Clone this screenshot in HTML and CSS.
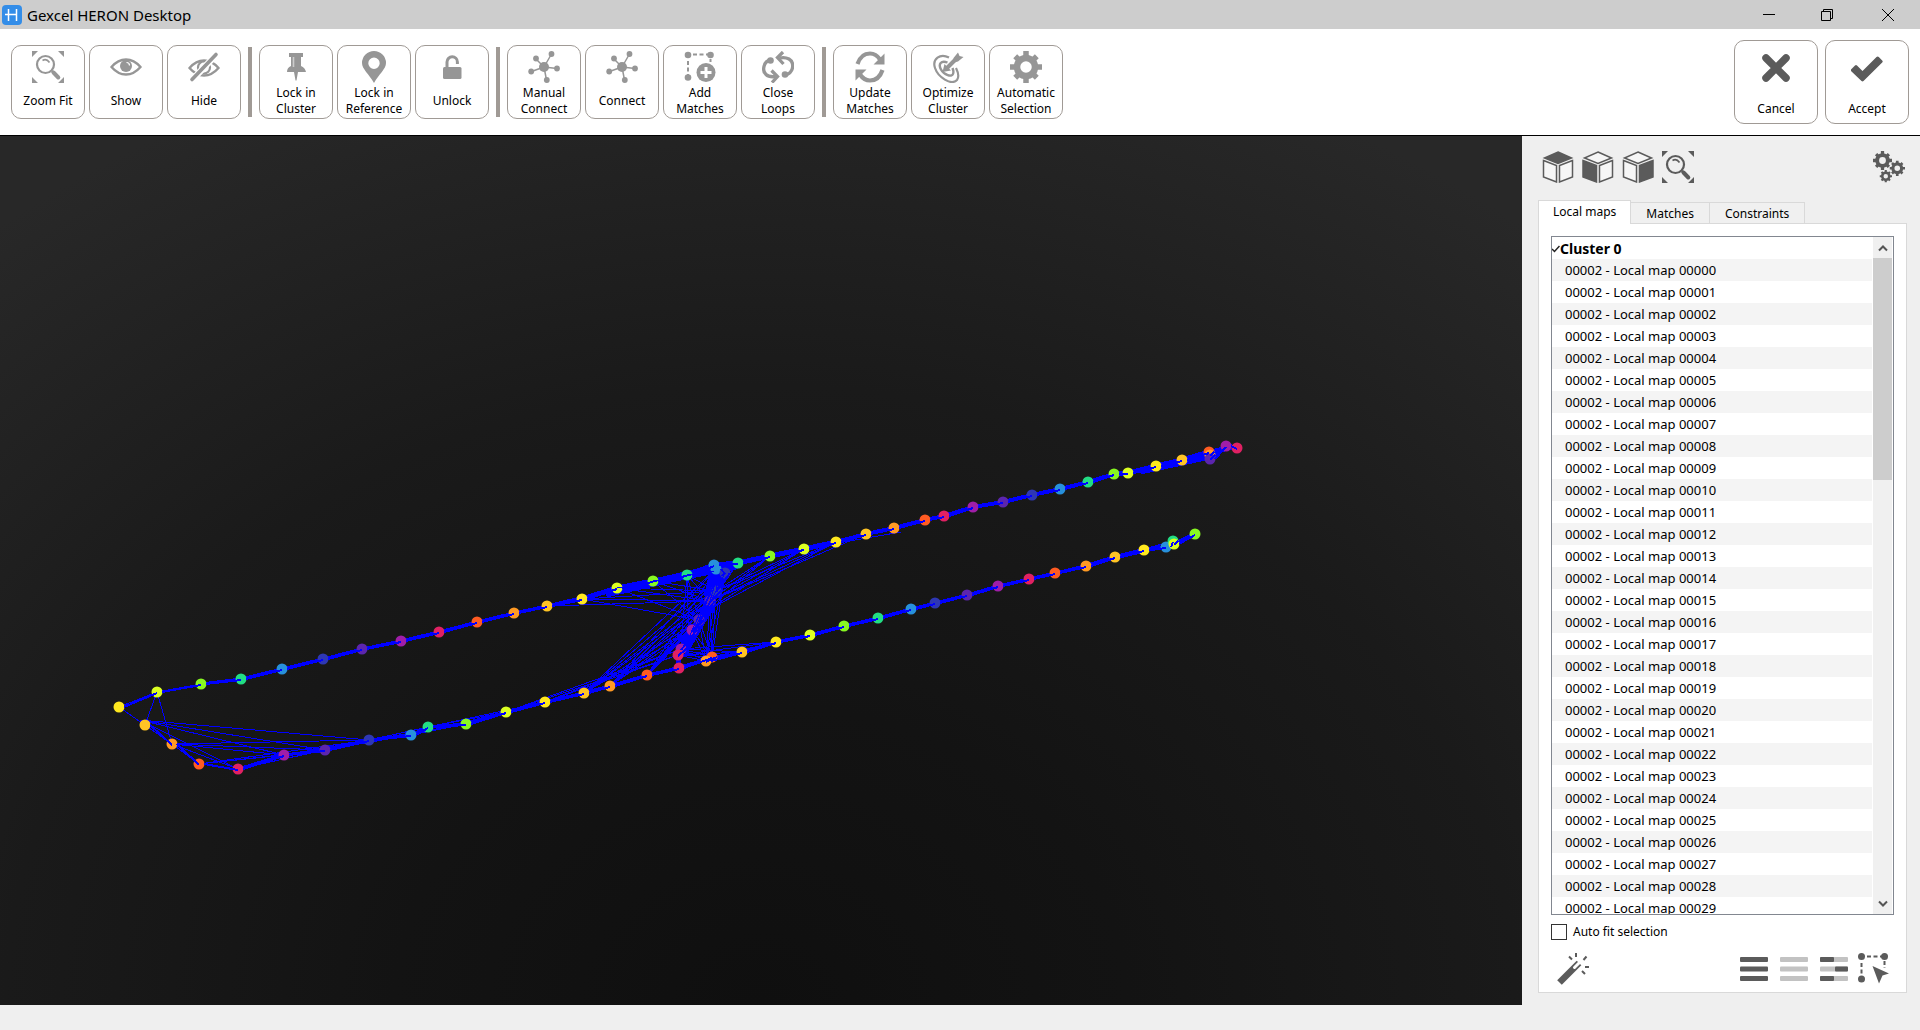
FILE: index.html
```html
<!DOCTYPE html>
<html lang="en">

<head>
    <meta charset="UTF-8">
    <meta name="viewport" content="width=device-width, initial-scale=1.0">
    <title>Gexcel HERON Desktop</title>
    <link rel="stylesheet" href="styles.css">
</head>

<body>
    <!-- shared icons -->
    <svg class="sprite" aria-hidden="true">
        <symbol id="i-zoom" viewBox="0 0 32 32">
            <path fill="currentColor" d="M0 0h6L0 6zM32 0h-6l6 6zM0 32h6l-6-6zM32 32h-6l6-6z" />
            <circle cx="13.500" cy="13.500" r="8.500" fill="none" stroke="currentColor" stroke-width="2.200" />
            <path d="M10.500 9.500q4-2.500 7 2" fill="none" stroke="currentColor" stroke-width="1.600" />
            <path d="M20 20l1.500 1.500" stroke="currentColor" stroke-width="2.500" />
            <path d="M21.500 21.500l4.800 5" stroke="currentColor" stroke-width="4" stroke-linecap="round" />
        </symbol>
        <symbol id="i-eye" viewBox="0 0 32 32">
            <path d="M1.500 16Q8 8.500 16 8.500T30.500 16Q24 23.500 16 23.500T1.500 16z" fill="none" stroke="currentColor" stroke-width="2.400" />
            <circle cx="16" cy="15" r="6" fill="currentColor" />
            <path d="M16.500 11.500q3 0 3 3" fill="none" stroke="#fff" stroke-width="1.200" />
        </symbol>
        <symbol id="i-hide" viewBox="0 0 32 32">
            <path d="M1.500 17Q8 9.500 16 9.500T30.500 17Q24 24.500 16 24.500T1.500 17z" fill="none" stroke="currentColor" stroke-width="2.400" />
            <circle cx="16" cy="16.500" r="6" fill="none" stroke="currentColor" stroke-width="2.200" />
            <path d="M5 28L28 4" stroke="#fff" stroke-width="6.500" />
            <path d="M4 28.500L28 3.500" stroke="currentColor" stroke-width="3.600" stroke-linecap="round" />
        </symbol>
        <symbol id="i-pin" viewBox="0 0 32 32">
            <path fill="currentColor" d="M9 2h14v4h-2v9q4 1.500 5 6h-8l-1.500 8.500h-1L14 21H7q0-4.500 4-6V6H9z" />
            <path d="M13.500 6v10" stroke="#ccc" stroke-width="1.600" />
        </symbol>
        <symbol id="i-marker" viewBox="0 0 32 32">
            <path fill="currentColor" fill-rule="evenodd" d="M16 0a12 12 0 0 1 12 12c0 6-7 11-12 20C11 23 4 18 4 12A12 12 0 0 1 16 0zm0 6.500a5.700 5.700 0 1 0 0 11.400a5.700 5.700 0 0 0 0-11.400z" />
        </symbol>
        <symbol id="i-unlock" viewBox="0 0 32 32">
            <rect x="7" y="16" width="18.500" height="12" rx="1.500" fill="currentColor" />
            <path d="M11 17v-6a5.200 5.200 0 0 1 10.400 0v2" fill="none" stroke="currentColor" stroke-width="3" />
        </symbol>
        <symbol id="i-nodes" viewBox="0 0 32 32">
            <path d="M16 16L8 8M16 16L23.500 3M16 16l13 1.500M16 16L3.500 20.500M16 16l2.500 13" stroke="currentColor" stroke-width="1.500" />
            <g fill="currentColor">
                <circle cx="16" cy="16" r="5" />
                <circle cx="8" cy="7.500" r="2.900" />
                <circle cx="23.500" cy="3" r="2.900" />
                <circle cx="29" cy="17.500" r="2.900" />
                <circle cx="3.200" cy="20.500" r="2.900" />
                <circle cx="18.800" cy="29" r="2.900" />
            </g>
        </symbol>
        <symbol id="i-add" viewBox="0 0 32 32">
            <path d="M4 10v14M9 3.500h15M26.500 8v3" fill="none" stroke="currentColor" stroke-width="2" stroke-dasharray="4 2.500" />
            <g fill="currentColor">
                <circle cx="4" cy="4" r="3.300" />
                <circle cx="26.500" cy="4" r="3.300" />
                <circle cx="4" cy="26.500" r="3.300" />
                <circle cx="22" cy="21.500" r="9.500" />
            </g>
            <path d="M22 16v11M16.500 21.500h11" stroke="#fff" stroke-width="3" />
        </symbol>
        <symbol id="i-loops" viewBox="0 0 32 32">
            <g fill="none" stroke="currentColor" stroke-width="3.300">
                <path d="M9 9C1 10 0 20 4 23.500q3 3 10 2" />
                <path d="M23 24.500C33 21 32 11 27 8q-4-2-9-1" />
                <path d="M9.500 19.500l6 6-5.500 6M21 1l-5.500 5.500 6 6.500" />
            </g>
            <circle cx="8.500" cy="9.500" r="3.300" fill="currentColor" />
            <circle cx="23" cy="23.500" r="3.300" fill="currentColor" />
        </symbol>
        <symbol id="i-update" viewBox="0 0 32 32">
            <path d="M3.500 13Q7 2.500 16 2.500q6 0 10 6M28.500 19Q25 29.500 16 29.500q-6 0-10-6" fill="none" stroke="currentColor" stroke-width="4.200" />
            <path fill="currentColor" d="M30.500 2.500v11H19.500zM1.500 29.500v-11h11z" />
        </symbol>
        <symbol id="i-target" viewBox="0 0 32 32">
            <g fill="none" stroke="currentColor">
                <path d="M17 6.500C8 2 0 8 3 17s16 18 22 12q3-4-1-12" stroke-width="2.200" />
                <path d="M15.500 11.500C9 9 6 13 9 18.500s11 8 12 4.500q1-2-.5-6" stroke-width="2.400" />
                <path d="M13.500 18.500L24 8" stroke-width="4" />
            </g>
            <path fill="currentColor" d="M21.500 7L26 1.500 27.500 5l4 1L26 10.500l-4 1zM10.500 21l2-8 6.500 6.500z" />
        </symbol>
        <symbol id="i-gear" viewBox="0 0 32 32">
            <circle cx="16" cy="16" r="9" fill="none" stroke="currentColor" stroke-width="6.500" />
            <path d="M16 0v6M16 26v6M0 16h6M26 16h6M5.200 5.200L9 9M23 23l3.800 3.800M5.200 26.800L9 23M23 9l3.800-3.800" stroke="currentColor" stroke-width="5.500" />
        </symbol>
        <symbol id="i-cross" viewBox="0 0 32 32">
            <path d="M6 6l20 20M26 6L6 26" stroke="currentColor" stroke-width="7.500" stroke-linecap="round" />
        </symbol>
        <symbol id="i-check" viewBox="0 0 32 32">
            <path d="M0 17.500l4-4q1-.8 2 0l5.500 5.500L25.500 5q1.200-1 2.300 0l3.400 3.600q1 1 0 2L12.500 29q-1 .8-2 0L0 19z" fill="currentColor" />
        </symbol>
        <symbol id="i-select" viewBox="0 0 32 32">
            <path d="M3.500 10v14M9 3.500h15M26.500 8v7" fill="none" stroke="currentColor" stroke-width="2" stroke-dasharray="4 2.500" />
            <g fill="currentColor">
                <circle cx="3.500" cy="3.500" r="3.500" />
                <circle cx="26.500" cy="3.500" r="3.500" />
                <circle cx="3.500" cy="26" r="3.500" />
                <path d="M14.500 13l16.500 7.500-6.500 2L21 30.500z" />
            </g>
        </symbol>
    </svg>

    <header class="titlebar">
        <svg class="app-logo" viewBox="0 0 20 20">
            <rect width="20" height="20" rx="4" fill="#338de8" />
            <path d="M6.500 4v12M14.500 4v12M3 9.500h11.500" stroke="#fff" stroke-width="1.500" />
        </svg>
        <h1>Gexcel HERON Desktop</h1>
        <div class="window-buttons">
            <button type="button" aria-label="Minimize"><svg viewBox="0 0 12 12"><path d="M0 5.500h12" /></svg></button>
            <button type="button" aria-label="Restore"><svg viewBox="0 0 12 12"><path d="M.5 2.500h9v9h-9zM2.500 2.500v-2h9v9h-2" /></svg></button>
            <button type="button" aria-label="Close"><svg viewBox="0 0 12 12"><path d="M0 0l12 12M12 0L0 12" /></svg></button>
        </div>
    </header>

    <div class="toolbar">
        <div class="tool-group">
            <button type="button" class="tool"><svg><use href="#i-zoom" /></svg><span>Zoom Fit</span></button>
            <button type="button" class="tool"><svg><use href="#i-eye" /></svg><span>Show</span></button>
            <button type="button" class="tool"><svg><use href="#i-hide" /></svg><span>Hide</span></button>
        </div>
        <div class="tool-group">
            <button type="button" class="tool"><svg><use href="#i-pin" /></svg><span>Lock in<br>Cluster</span></button>
            <button type="button" class="tool"><svg><use href="#i-marker" /></svg><span>Lock in<br>Reference</span></button>
            <button type="button" class="tool"><svg><use href="#i-unlock" /></svg><span>Unlock</span></button>
        </div>
        <div class="tool-group">
            <button type="button" class="tool"><svg><use href="#i-nodes" /></svg><span>Manual<br>Connect</span></button>
            <button type="button" class="tool"><svg><use href="#i-nodes" /></svg><span>Connect</span></button>
            <button type="button" class="tool"><svg><use href="#i-add" /></svg><span>Add<br>Matches</span></button>
            <button type="button" class="tool"><svg><use href="#i-loops" /></svg><span>Close<br>Loops</span></button>
        </div>
        <div class="tool-group">
            <button type="button" class="tool"><svg><use href="#i-update" /></svg><span>Update<br>Matches</span></button>
            <button type="button" class="tool"><svg><use href="#i-target" /></svg><span>Optimize<br>Cluster</span></button>
            <button type="button" class="tool"><svg><use href="#i-gear" /></svg><span>Automatic<br>Selection</span></button>
        </div>
        <div class="confirm">
            <button type="button" class="tool big"><svg><use href="#i-cross" /></svg><span>Cancel</span></button>
            <button type="button" class="tool big"><svg><use href="#i-check" /></svg><span>Accept</span></button>
        </div>
    </div>

    <main class="workspace">
        <div class="viewport">
            <svg id="graph" viewBox="0 136 1522 869" preserveAspectRatio="xMidYMid meet"></svg>
        </div>

        <aside class="panel">
            <div class="view-tools">
                <button type="button" aria-label="Top view">
                    <svg viewBox="0 0 32 32"><path class="face" d="M1.500 9.500l13 5V31l-13-5zM30.500 9.500l-13 5V31l13-5z" /><path class="face solid" d="M16 1l13.500 6L16 12.500 2.500 7z" /></svg>
                </button>
                <button type="button" aria-label="Left view">
                    <svg viewBox="0 0 32 32"><path class="face solid" d="M1 9.500l13.500 5V31L1 26z" /><path class="face" d="M30.500 9.500l-13 5V31l13-5zM16 1l13.500 6L16 12.500 2.500 7z" /></svg>
                </button>
                <button type="button" aria-label="Right view">
                    <svg viewBox="0 0 32 32"><path class="face solid" d="M31 9.500l-13.500 5V31L31 26z" /><path class="face" d="M1.500 9.500l13 5V31l-13-5zM16 1l13.500 6L16 12.500 2.500 7z" /></svg>
                </button>
                <button type="button" aria-label="Zoom fit"><svg><use href="#i-zoom" /></svg></button>
                <button type="button" class="push" aria-label="Settings">
                    <svg viewBox="0 0 32 32">
                        <use href="#i-gear" x="0" y="0" width="19" height="19" />
                        <use href="#i-gear" x="16.500" y="9.500" width="15.500" height="15.500" />
                        <use href="#i-gear" x="6.500" y="19" width="12.500" height="12.500" />
                    </svg>
                </button>
            </div>

            <div class="tabs" role="tablist">
                <button type="button" class="tab active" role="tab" aria-selected="true">Local maps</button>
                <button type="button" class="tab" role="tab">Matches</button>
                <button type="button" class="tab" role="tab">Constraints</button>
            </div>

            <div class="tab-body">
                <div class="list-box">
                    <ul class="map-list">
                        <li class="cluster"><svg viewBox="0 0 8 8"><path d="M0 4l2.500 2.500L7.500 1" /></svg>Cluster 0</li>
                        <li>00002 - Local map 00000</li>
                        <li>00002 - Local map 00001</li>
                        <li>00002 - Local map 00002</li>
                        <li>00002 - Local map 00003</li>
                        <li>00002 - Local map 00004</li>
                        <li>00002 - Local map 00005</li>
                        <li>00002 - Local map 00006</li>
                        <li>00002 - Local map 00007</li>
                        <li>00002 - Local map 00008</li>
                        <li>00002 - Local map 00009</li>
                        <li>00002 - Local map 00010</li>
                        <li>00002 - Local map 00011</li>
                        <li>00002 - Local map 00012</li>
                        <li>00002 - Local map 00013</li>
                        <li>00002 - Local map 00014</li>
                        <li>00002 - Local map 00015</li>
                        <li>00002 - Local map 00016</li>
                        <li>00002 - Local map 00017</li>
                        <li>00002 - Local map 00018</li>
                        <li>00002 - Local map 00019</li>
                        <li>00002 - Local map 00020</li>
                        <li>00002 - Local map 00021</li>
                        <li>00002 - Local map 00022</li>
                        <li>00002 - Local map 00023</li>
                        <li>00002 - Local map 00024</li>
                        <li>00002 - Local map 00025</li>
                        <li>00002 - Local map 00026</li>
                        <li>00002 - Local map 00027</li>
                        <li>00002 - Local map 00028</li>
                        <li>00002 - Local map 00029</li>
                    </ul>
                    <div class="scrollbar">
                        <button type="button" aria-label="Scroll up"><svg viewBox="0 0 10 8"><path d="M1 6.500l4-4 4 4" /></svg></button>
                        <div class="track"><div class="thumb"></div></div>
                        <button type="button" aria-label="Scroll down"><svg viewBox="0 0 10 8"><path d="M1 1.500l4 4 4-4" /></svg></button>
                    </div>
                </div>

                <div class="auto-fit">
                    <input type="checkbox" id="auto-fit">
                    <label for="auto-fit">Auto fit selection</label>
                </div>

                <div class="list-tools">
                    <button type="button" aria-label="Magic wand">
                        <svg viewBox="0 0 32 32">
                            <path d="M2.500 29.500L22 10" stroke="currentColor" stroke-width="6.500" />
                            <path d="M17.500 14.500L22 10" stroke="#fff" stroke-width="3" stroke-linecap="round" />
                            <path d="M19 0v4M12 3.500l3 3M29.500 3.500l-3 3.500M28 14h4M25 18l3 3" stroke="currentColor" stroke-width="2" />
                        </svg>
                    </button>
                    <button type="button" class="push" aria-label="Select all">
                        <svg viewBox="0 0 32 32"><g fill="#5b5b5b"><rect x="2" y="4" width="28" height="5" rx="1" /><rect x="2" y="13.500" width="28" height="5" rx="1" /><rect x="2" y="23" width="28" height="5" rx="1" /></g></svg>
                    </button>
                    <button type="button" aria-label="Select none">
                        <svg viewBox="0 0 32 32"><g fill="#c2c2c2"><rect x="2" y="4" width="28" height="5" rx="1" /><rect x="2" y="13.500" width="28" height="5" rx="1" /><rect x="2" y="23" width="28" height="5" rx="1" /></g></svg>
                    </button>
                    <button type="button" aria-label="Invert selection">
                        <svg viewBox="0 0 32 32">
                            <g fill="#c2c2c2"><rect x="2" y="4" width="28" height="5" rx="1" /><rect x="2" y="13.500" width="28" height="5" rx="1" /><rect x="2" y="23" width="28" height="5" rx="1" /></g>
                            <g fill="#5b5b5b"><rect x="2" y="4" width="14" height="5" rx="1" /><rect x="17" y="13.500" width="13" height="5" rx="1" /><rect x="2" y="23" width="14" height="5" rx="1" /></g>
                        </svg>
                    </button>
                    <button type="button" aria-label="Select in view"><svg><use href="#i-select" /></svg></button>
                </div>
            </div>
        </aside>
    </main>

    <footer class="statusbar"></footer>

    <script src="script.js"></script>
</body>

</html>
```
FILE: styles.css
```css
* {
    margin: 0;
    padding: 0;
    box-sizing: border-box;
    font-family: "Noto Sans", "Open Sans", sans-serif;
}

body {
    height: 100vh;
    display: flex;
    flex-direction: column;
    background-color: #efefef;
    color: #000;
    font-size: 12px;
    line-height: 16px;
}

button {
    background: none;
    border: none;
    color: inherit;
    font-size: 12px;
    line-height: 16px;
}

svg {
    display: block;
}

.sprite {
    position: absolute;
    width: 0;
    height: 0;
}

/* title bar */
.titlebar {
    display: flex;
    align-items: center;
    height: 29px;
    padding-left: 2px;
    background-color: #cdcdcd;
}

.app-logo {
    width: 20px;
    height: 20px;
    margin-right: 5px;
}

.titlebar h1 {
    font-size: 15px;
    font-weight: normal;
    line-height: 29px;
    padding-top: 1px;
}

.window-buttons {
    display: flex;
    margin-left: auto;
}

.window-buttons button {
    width: 58px;
    height: 29px;
    display: flex;
    align-items: center;
    justify-content: center;
}

.window-buttons button:last-child {
    width: 64px;
}

.window-buttons svg {
    width: 12px;
    height: 12px;
    fill: none;
    stroke: #000;
}

/* toolbar */
.toolbar {
    display: flex;
    align-items: center;
    padding: 11px;
    background-color: #fff;
    border-bottom: 1px solid #000;
}

.tool-group {
    display: flex;
    gap: 4px;
    align-items: center;
}

.tool-group + .tool-group::before {
    content: "";
    width: 4px;
    height: 70px;
    margin: 0 3px 0 7px;
    background-color: #a09a95;
}

.tool {
    width: 74px;
    height: 74px;
    display: flex;
    flex-direction: column;
    align-items: center;
    padding-top: 5px;
    border: 1px solid #a09a95;
    border-radius: 10px;
    background-color: #fff;
}

.tool svg {
    width: 32px;
    height: 32px;
    color: #969696;
}

.tool span {
    flex: 1;
    display: flex;
    align-items: center;
    text-align: center;
    color: #000;
}

.confirm {
    display: flex;
    gap: 7px;
    margin-left: auto;
}

.tool.big {
    width: 84px;
    height: 84px;
    padding-top: 11px;
}

.tool.big svg {
    color: #5b5b5b;
}

.tool.big span {
    padding-top: 10px;
}

/* workspace */
.workspace {
    flex: 1;
    min-height: 0;
    display: flex;
}

.viewport {
    flex: 1;
    min-width: 0;
    background: radial-gradient(ellipse 80% 115% at 50% 100%, #0f0f0f 0%, #131313 30%, #1a1a1a 62%, #282828 100%);
}

#graph {
    width: 100%;
    height: 100%;
}

#graph line {
    stroke: #0000ff;
    shape-rendering: crispEdges;
}

.panel {
    width: 398px;
    display: flex;
    flex-direction: column;
    padding: 15px 13px 12px 16px;
    background-color: #efefef;
}

.view-tools,
.list-tools {
    display: flex;
    gap: 8px;
    color: #5b5b5b;
}

.view-tools {
    padding: 0 2px 0 4px;
}

.view-tools svg,
.list-tools svg {
    width: 32px;
    height: 32px;
}

.push {
    margin-left: auto;
}

.face {
    fill: #f6f6f6;
    stroke: #5b5b5b;
    stroke-width: 1.5;
}

.face.solid {
    fill: #5b5b5b;
}

.tabs {
    display: flex;
    align-items: flex-end;
    margin-top: 17px;
}

.tab {
    height: 21px;
    padding: 1px 15px 0;
    border: 1px solid #d9d9d9;
    border-width: 1px 1px 0 0;
    background-color: #f0f0f0;
}

.tab.active {
    height: 24px;
    margin-bottom: -1px;
    padding: 0 14px 1px;
    border-left-width: 1px;
    background-color: #fff;
    z-index: 1;
}

.tab-body {
    flex: 1;
    min-height: 0;
    display: flex;
    flex-direction: column;
    padding: 12px;
    border: 1px solid #d9d9d9;
    background-color: #fff;
}

.list-box {
    flex: 1;
    min-height: 0;
    display: flex;
    gap: 1px;
    padding-right: 1px;
    border: 1px solid #828790;
}

.map-list {
    flex: 1;
    overflow: hidden;
    list-style: none;
    font-size: 13px;
    line-height: 21px;
}

.map-list li {
    padding: 1px 0 0 13px;
}

.map-list li:nth-child(even) {
    background-color: #f4f4f4;
}

.map-list .cluster {
    display: flex;
    align-items: center;
    padding-left: 0;
    font-size: 14px;
    font-weight: bold;
}

.cluster svg {
    width: 8px;
    height: 8px;
    fill: none;
    stroke: #222;
    stroke-width: 1.5;
}

.scrollbar {
    width: 19px;
    display: flex;
    flex-direction: column;
    background-color: #f0f0f0;
}

.scrollbar button {
    height: 21px;
    display: flex;
    align-items: center;
    justify-content: center;
}

.scrollbar svg {
    width: 10px;
    height: 8px;
    fill: none;
    stroke: #555;
    stroke-width: 2;
}

.track {
    flex: 1;
}

.thumb {
    height: 35%;
    background-color: #cdcdcd;
}

.auto-fit {
    display: flex;
    align-items: center;
    gap: 6px;
    margin-top: 9px;
}

.auto-fit input {
    appearance: none;
    width: 16px;
    height: 16px;
    border: 1px solid #333;
    background-color: #fff;
}

.list-tools {
    margin: 13px 0 -5px;
    padding: 0 4px 0 6px;
}

.statusbar {
    height: 25px;
    background-color: #efefef;
}
```
FILE: script.js
```js
const SVG_NS = 'http://www.w3.org/2000/svg';
const graph = document.getElementById('graph');

const colors = ['#ffe81f', '#ffc425', '#ff9a24', '#ff5b22', '#e02163', '#a01ea8',
    '#5c25ae', '#2e37b4', '#2790dc', '#22dd84', '#88f722', '#dcff22'];

// [x, y, color] along each stretch of the trajectory
const upper = [
    [119, 707, 0], [157, 692, 11], [201, 684, 10], [241, 679, 9], [282, 669, 8], [323, 659, 7],
    [362, 649, 6], [401, 641, 5], [439, 632, 4], [477, 622, 3], [514, 613, 2], [547, 606, 1],
    [582, 599, 0], [617, 588, 11], [653, 581, 10], [687, 575, 9], [714, 565, 8], [738, 563, 9],
    [770, 556, 10], [804, 549, 11], [836, 542, 0], [866, 534, 1], [894, 528, 2], [925, 520, 3],
    [944, 516, 4], [973, 507, 5], [1003, 502, 6], [1032, 495, 7], [1060, 489, 8], [1088, 482, 9],
    [1114, 474, 10], [1128, 473, 11], [1156, 466, 0], [1182, 460, 1], [1209, 452, 3], [1210, 455, 2],
    [1210, 459, 6], [1226, 446, 5], [1237, 448, 4]
];

const lower = [
    [145, 725, 1], [172, 744, 2], [199, 764, 3], [238, 769, 4], [284, 755, 5], [325, 750, 6],
    [369, 740, 7], [411, 735, 8], [428, 727, 9], [466, 724, 10], [506, 712, 11], [545, 702, 0],
    [584, 693, 1], [610, 686, 2], [647, 675, 3], [679, 668, 4], [712, 657, 3], [706, 661, 2],
    [742, 652, 1], [776, 642, 0], [810, 635, 11], [844, 626, 10], [878, 618, 9], [911, 609, 8],
    [935, 603, 7], [967, 595, 6], [998, 586, 5], [1029, 579, 4], [1055, 573, 3], [1086, 566, 2],
    [1115, 557, 1], [1144, 550, 0], [1166, 547, 8], [1173, 541, 9], [1174, 544, 11], [1195, 534, 10]
];

// cross passage between the two long sides
const cross = [
    [716, 569, 8], [725, 573, 7], [716, 591, 7], [710, 601, 6], [699, 620, 6],
    [692, 630, 5], [681, 649, 5], [678, 655, 4]
];

function line(a, b, width = 1) {
    const el = document.createElementNS(SVG_NS, 'line');
    el.setAttribute('x1', a[0]);
    el.setAttribute('y1', a[1]);
    el.setAttribute('x2', b[0]);
    el.setAttribute('y2', b[1]);
    el.setAttribute('stroke-width', width);
    graph.appendChild(el);
}

function dot([x, y, color]) {
    const el = document.createElementNS(SVG_NS, 'circle');
    el.setAttribute('cx', x);
    el.setAttribute('cy', y);
    el.setAttribute('r', 5.5);
    el.setAttribute('fill', colors[color]);
    graph.appendChild(el);
}

function chain(nodes, from, to, width) {
    for (let i = from; i < to; i++) line(nodes[i], nodes[i + 1], width);
}

function fan(sources, targets) {
    sources.forEach(s => targets.forEach(t => line(s, t)));
}

// sequential matches
chain(upper, 0, 2, 1);
chain(upper, 2, 12, 3);
chain(upper, 12, 20, 5);
chain(upper, 20, 30, 4);
chain(upper, 30, 38, 5);
chain(lower, 0, 3, 1);
chain(lower, 3, 20, 3);
chain(lower, 20, 29, 3);
chain(lower, 29, 35, 4);
chain(cross, 0, 7, 6);

// matches that skip one or more maps
for (let i = 3; i < upper.length - 3; i++) {
    line(upper[i], upper[i + 2]);
    line(upper[i], upper[i + 3]);
}
for (let i = 3; i < lower.length - 3; i++) {
    line(lower[i], lower[i + 2]);
    line(lower[i], lower[i + 3]);
}
line([606, 594], [714, 569], 7);
line([653, 583], [738, 566], 6);
line([1140, 471], [1210, 456], 7);
line([1170, 464], [1226, 448], 5);
line([715, 572], [708, 612], 12);
line([708, 610], [684, 652], 8);

// start of the trajectory
line(upper[0], lower[1]);
fan([upper[1]], [lower[0], lower[1]]);
fan([[140, 720], lower[1]], [lower[3], lower[4], lower[5], lower[6]]);
fan([lower[2], lower[3]], [lower[4], lower[5], lower[6]]);

// loop closures around the cross passage
fan(upper.slice(12, 16), [cross[2], cross[3], cross[4]]);
line(upper[11], cross[3]);
fan(upper.slice(17, 21), [cross[2], cross[3], [704, 612]]);
line(upper[21], cross[3]);
line([901, 532], upper[19]);
fan(lower.slice(12, 15), cross.slice(0, 6));
fan([lower[10], lower[11]], [cross[6], cross[7]]);
fan([lower[16], lower[17]], cross.slice(1, 8));
fan([cross[6], cross[7]], [lower[18], lower[19]]);
fan([upper[15]], [lower[15], [689, 640]]);
line(lower[14], cross[4], 3);
line(lower[15], cross[7], 5);

upper.forEach(dot);
lower.forEach(dot);
cross.forEach(dot);

// links run over the lower half of each dot
[upper, lower, cross].forEach(nodes => {
    for (let i = 1; i < nodes.length; i++) {
        line([nodes[i - 1][0] + 5, nodes[i - 1][1]], [nodes[i][0], nodes[i][1] + 1], 2);
    }
});
fan(cross.slice(1, 6), [[716, 580], [686, 650]]);
fan(upper.slice(13, 16), [[714, 571]]);
```
